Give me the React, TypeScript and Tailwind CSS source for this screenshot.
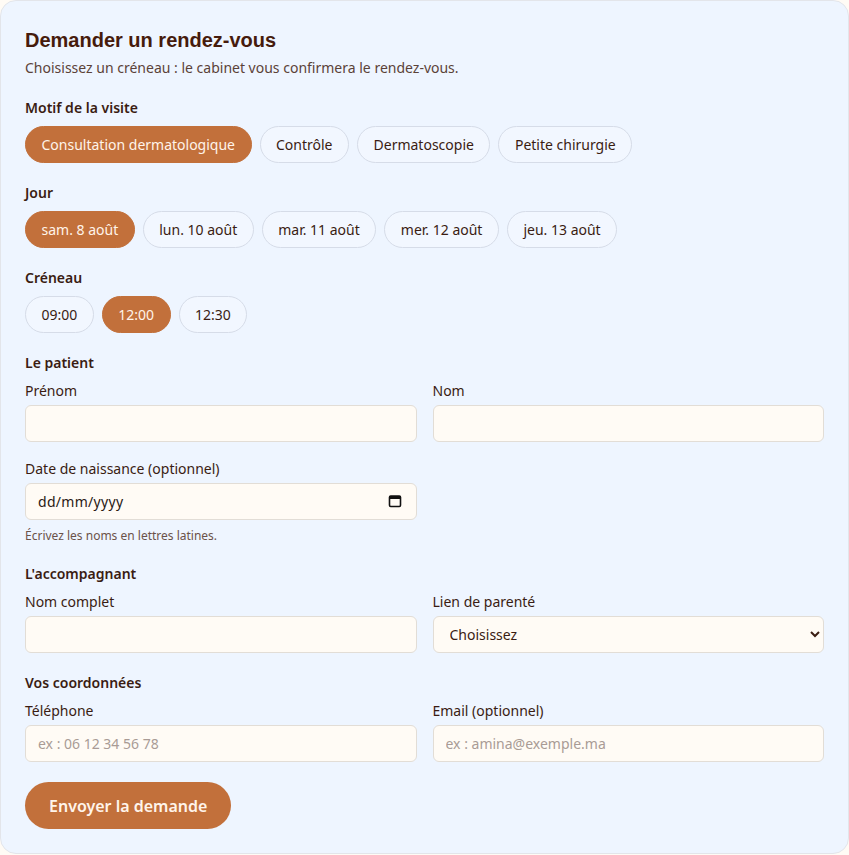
import React, { useState } from "react";

const Pill = ({ label, active, onClick }: { label: string; active?: boolean; onClick?: () => void }) => (
  <button
    type="button"
    onClick={onClick}
    className={
      active
        ? "h-[37px] rounded-full border border-[#c2703b] bg-[#c2703b] px-[15.5px] text-sm leading-5 text-[#fff4ea]"
        : "h-[37px] rounded-full border border-[#d6dce8] bg-[#f2f7ff] px-[15.5px] text-sm leading-5 text-[#3a1c12]"
    }
  >
    {label}
  </button>
);

const inputCls =
  "mt-1 block h-[37px] w-full rounded-md border border-[#e2ddd6] bg-[#fffbf5] px-3 text-sm text-[#3a1c12] placeholder:text-[#a99b95] outline-none";

const CalendarIcon = () => (
  <svg width="14" height="14" viewBox="0 0 14 14" aria-hidden="true">
    <rect x="1.5" y="2" width="11" height="10.5" rx="1.2" fill="none" stroke="#111" strokeWidth="1.6" />
    <rect x="1.5" y="2" width="11" height="3" fill="#111" />
  </svg>
);

export default function App() {
  const [motif, setMotif] = useState(0);
  const [jour, setJour] = useState(0);
  const [slot, setSlot] = useState(1);
  const motifs = ["Consultation dermatologique", "Contrôle", "Dermatoscopie", "Petite chirurgie"];
  const jours = ["sam. 8 août", "lun. 10 août", "mar. 11 août", "mer. 12 août", "jeu. 13 août"];
  const slots = ["09:00", "12:00", "12:30"];

  return (
    <div className="min-h-[855px] bg-[#fffbf5]" style={{ fontFamily: '"Noto Sans", sans-serif' }}>
      <div className="w-full rounded-2xl border border-[#e3e5ea] bg-[#eef5ff] px-6 pt-[25px] pb-6 text-[#3a1c12]">
        <h1
          className="text-xl leading-7 font-bold text-[#461b0c]"
          style={{ fontFamily: '"Liberation Sans", Arial, sans-serif' }}
        >
          Demander un rendez-vous
        </h1>
        <p className="mt-1 text-sm leading-5 text-[#5b4238]">
          Choisissez un créneau : le cabinet vous confirmera le rendez-vous.
        </p>

        <div className="mt-5">
          <div className="text-sm leading-5 font-semibold">Motif de la visite</div>
          <div className="mt-2 flex flex-wrap gap-2">
            {motifs.map((m, i) => (
              <Pill key={m} label={m} active={motif === i} onClick={() => setMotif(i)} />
            ))}
          </div>
        </div>

        <div className="mt-5">
          <div className="text-sm leading-5 font-semibold">Jour</div>
          <div className="mt-2 flex flex-wrap gap-2">
            {jours.map((m, i) => (
              <Pill key={m} label={m} active={jour === i} onClick={() => setJour(i)} />
            ))}
          </div>
        </div>

        <div className="mt-5">
          <div className="text-sm leading-5 font-semibold">Créneau</div>
          <div className="mt-2 flex flex-wrap gap-2">
            {slots.map((m, i) => (
              <Pill key={m} label={m} active={slot === i} onClick={() => setSlot(i)} />
            ))}
          </div>
        </div>

        <div className="mt-5">
          <div className="text-sm leading-5 font-semibold">Le patient</div>
          <div className="mt-2 grid grid-cols-2 gap-x-4 gap-y-[17px]">
            <label className="block text-sm leading-5">
              Prénom
              <input type="text" className={inputCls} />
            </label>
            <label className="block text-sm leading-5">
              Nom
              <input type="text" className={inputCls} />
            </label>
            <label className="block text-sm leading-5">
              Date de naissance (optionnel)
              <span className="relative mt-1 block">
                <input
                  type="text"
                  placeholder="dd/mm/yyyy"
                  className="block h-[37px] w-full rounded-md border border-[#e2ddd6] bg-[#fffbf5] px-3 text-sm tracking-[0.3px] text-[#3a1c12] placeholder:text-[#2a1a14] outline-none"
                />
                <span className="pointer-events-none absolute top-[11px] right-[15px]">
                  <CalendarIcon />
                </span>
              </span>
            </label>
          </div>
          <p className="mt-2 text-xs leading-4 text-[#6b5249]">Écrivez les noms en lettres latines.</p>
        </div>

        <div className="mt-5">
          <div className="text-sm leading-5 font-semibold">L'accompagnant</div>
          <div className="mt-2 grid grid-cols-2 gap-x-4">
            <label className="block text-sm leading-5">
              Nom complet
              <input type="text" className={inputCls} />
            </label>
            <label className="block text-sm leading-5">
              Lien de parenté
              <select className={inputCls} defaultValue="">
                <option value="">Choisissez</option>
                <option>Parent</option>
                <option>Conjoint</option>
                <option>Enfant</option>
              </select>
            </label>
          </div>
        </div>

        <div className="mt-5">
          <div className="text-sm leading-5 font-semibold">Vos coordonnées</div>
          <div className="mt-2 grid grid-cols-2 gap-x-4">
            <label className="block text-sm leading-5">
              Téléphone
              <input type="tel" placeholder="ex : 06 12 34 56 78" className={inputCls} />
            </label>
            <label className="block text-sm leading-5">
              Email (optionnel)
              <input type="email" placeholder="ex : amina@exemple.ma" className={inputCls} />
            </label>
          </div>
        </div>

        <button
          type="button"
          className="mt-5 h-[47px] rounded-full bg-[#c2703b] px-6 text-base font-semibold text-[#fff4ea]"
        >
          Envoyer la demande
        </button>
      </div>
    </div>
  );
}
